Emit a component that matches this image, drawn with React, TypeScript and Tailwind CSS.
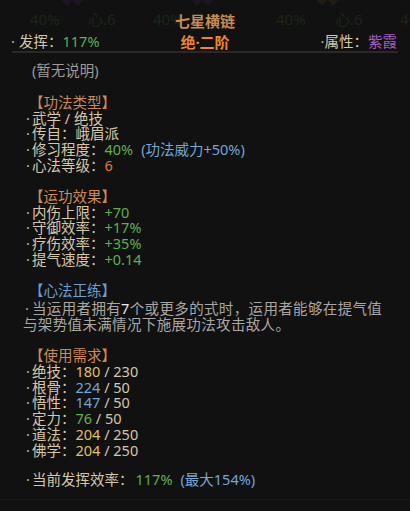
import React from "react";

const LABEL = "text-[#d4c7ab]";
const GREEN = "text-[#5fb04f]";
const BLUE = "text-[#74a6d6]";
const YELLOW = "text-[#e3c062]";

function Dot() {
  return <span className="inline-block w-[6px] text-[#bdb39d]">·</span>;
}
function Row({ children }: { children: React.ReactNode }) {
  return (
    <div className={`h-[15.8px] leading-[15.8px] whitespace-nowrap ${LABEL}`}>
      <Dot />
      {children}
    </div>
  );
}
function Section({ title, color = "text-[#c98a58]", children }: { title: string; color?: string; children: React.ReactNode }) {
  return (
    <div className="flex flex-col">
      <div className={`h-[15.8px] leading-[15.8px] pl-[10px] whitespace-nowrap ${color}`}>
        <span className="-ml-[7px]">【</span>
        {title}
        <span className="-mr-[7px]">】</span>
      </div>
      {children}
    </div>
  );
}

function Req({ k, v, max, c }: { k: string; v: number; max: number; c: string }) {
  return (
    <Row>
      {k}：<span className={c}>{v}</span> / {max}
    </Row>
  );
}

const ghost = [
  { t: "40%", w: "w-[58px]" },
  { t: "心.6", w: "w-[65px]" },
  { t: "40%", w: "w-[123px]" },
  { t: "40%", w: "w-[59px]" },
  { t: "心.6", w: "w-[65px]" },
  { t: "40", w: "w-[10px]" },
];

export default function App() {
  return (
    <div
      className="w-[410px] h-[511px] bg-[#111111] overflow-hidden relative text-[14.5px]"
      style={{ fontFamily: '"Noto Sans", "Noto Sans CJK SC", sans-serif' }}
    >
      {/* ghost of the list lying behind the tooltip */}
      <div className="absolute inset-x-0 top-0 pointer-events-none">
        <div className="flex pl-[63px] gap-[3px]">
          <div className="w-[8px] h-[8px] -mt-[4px] rotate-45 bg-[#1d1522]" />
          <div className="w-[8px] h-[8px] -mt-[4px] rotate-45 bg-[#1d1522]" />
          <div className="w-[105px]" />
          <div className="w-[8px] h-[8px] -mt-[4px] rotate-45 bg-[#1d1522]" />
          <div className="w-[8px] h-[8px] -mt-[4px] rotate-45 bg-[#1d1522]" />
          <div className="w-[100px]" />
          <div className="w-[8px] h-[8px] -mt-[4px] rotate-45 bg-[#1f1c16]" />
          <div className="w-[8px] h-[8px] -mt-[4px] rotate-45 bg-[#1f1c16]" />
        </div>
        <div className="flex pl-[30px] mt-[5px] text-[15px] leading-5 text-[#1c2519] whitespace-nowrap">
          {ghost.map((g, i) => (
            <div key={i} className={`${g.w} shrink-0 overflow-hidden`}>{g.t}</div>
          ))}
        </div>
      </div>

      <div className="relative">
        <div className="pt-[11px] text-center text-[15px] leading-5 font-bold text-[#c68a55]">七星横链</div>
        <div className="grid grid-cols-[1fr_auto_1fr] items-center px-[11px] h-[20px]">
          <div className={`${LABEL} whitespace-nowrap`}>
            <span className="inline-block w-[8px] text-[#bdb39d]">·</span>发挥：<span className={GREEN}>117%</span>
          </div>
          <div className="text-[15px] font-bold text-[#ef862f]">绝·二阶</div>
          <div className={`${LABEL} text-right whitespace-nowrap pr-[2px]`}>
            <span className="inline-block w-[8px] text-[#bdb39d]">·</span>属性：<span className="text-[#a55fc4]">紫霞</span>
          </div>
        </div>
        <div className="mx-[12px] h-[2px] bg-[#2a2927]" />
      </div>

      <div className="relative flex flex-col pl-[26px] pt-[10px]">
        <div className="h-[15.8px] leading-[15.8px] pl-[6px] text-[#9e9a94]">(暂无说明)</div>

        <div className="flex flex-col gap-[15px] mt-[16px]">
          <Section title="功法类型">
            <Row>武学 / 绝技</Row>
            <Row>传自：峨眉派</Row>
            <Row>
              修习程度：<span className={GREEN}>40%</span>
              <span className={`${BLUE} ml-[8px]`}>(功法威力+50%)</span>
            </Row>
            <Row>
              心法等级：<span className="text-[#e07a32]">6</span>
            </Row>
          </Section>

          <Section title="运功效果">
            <Row>内伤上限：<span className={GREEN}>+70</span></Row>
            <Row>守御效率：<span className={GREEN}>+17%</span></Row>
            <Row>疗伤效率：<span className={GREEN}>+35%</span></Row>
            <Row>提气速度：<span className={GREEN}>+0.14</span></Row>
          </Section>

          <Section title="心法正练" color="text-[#6a9fd2]">
            <div className="-ml-[3px] leading-[16.7px] pt-[1px] tracking-[0.35px] whitespace-nowrap text-[#a9a7a3]">
              <span className="inline-block w-[9px] pl-[2px]">·</span>当运用者拥有<span className="text-[#ececec]">7</span>个或更多的式时，运用者能够在提气值
              <br />
              与架势值未满情况下施展功法攻击敌人。
            </div>
          </Section>

          <Section title="使用需求">
            <Req k="绝技" v={180} max={230} c={YELLOW} />
            <Req k="根骨" v={224} max={50} c={BLUE} />
            <Req k="悟性" v={147} max={50} c={BLUE} />
            <Req k="定力" v={76} max={50} c={GREEN} />
            <Req k="道法" v={204} max={250} c={YELLOW} />
            <Req k="佛学" v={204} max={250} c={YELLOW} />
          </Section>

          <div className="-mt-[2px]">
            <Row>
              当前发挥效率：<span className={`${GREEN} ml-[2px]`}>117%</span>
              <span className={`${BLUE} ml-[8px]`}>(最大154%)</span>
            </Row>
          </div>
        </div>

        <div className="-ml-[26px] mt-[12px] h-px bg-[#181818]" />
      </div>
    </div>
  );
}
